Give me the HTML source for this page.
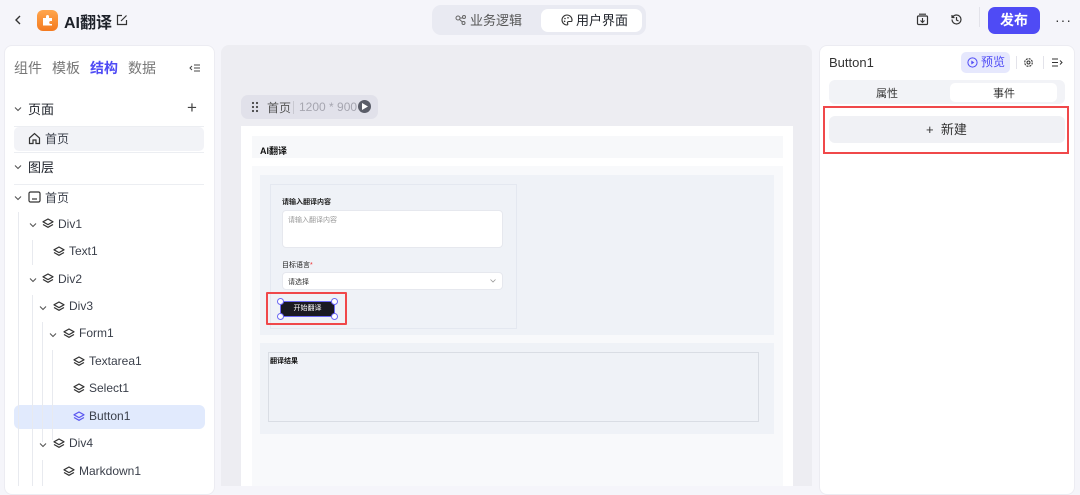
<!DOCTYPE html>
<html><head><meta charset="utf-8"><style>
*{margin:0;padding:0;box-sizing:border-box}
body{width:1080px;height:486px;overflow:hidden;background:#f5f5fa;font-family:"Liberation Sans","Noto Sans CJK SC",sans-serif;position:relative;color:#1d2129}
.a{position:absolute}
.t{position:absolute;white-space:nowrap}
svg{position:absolute}
.row{position:absolute;font-size:12px;color:#3a3f4a;white-space:nowrap}
.vl{position:absolute;width:1px;background:#e8eaef}
</style></head><body>
<svg style="left:13px;top:14px" width="10" height="12" viewBox="0 0 10 12"><path d="M7 2L3 6l4 4" fill="none" stroke="#333" stroke-width="1.4"/></svg>
<div class="a" style="left:37px;top:10px;width:21px;height:21px;border-radius:6px;background:linear-gradient(#ffa64d,#f47a1f)"></div>
<svg style="left:41px;top:14px" width="13" height="13" viewBox="0 0 13 13"><path d="M2 4h3V2.5a1.5 1.5 0 013 0V4h3v3h-1.3a1.5 1.5 0 000 3H11v1.5H2z" fill="#fff"/></svg>
<div class="t" style="left:64px;top:9px;font-size:16px;font-weight:bold;color:#1d2129">AI翻译</div>
<svg style="left:116px;top:14px" width="12" height="12" viewBox="0 0 12 12"><path d="M6 1.5H1.5v9h9V6M5 7l5.5-5.5" fill="none" stroke="#333" stroke-width="1.2"/></svg>
<div class="a" style="left:432px;top:5px;width:214px;height:30px;border-radius:9px;background:#e9eaf2"></div>
<div class="a" style="left:541px;top:9px;width:101px;height:23px;border-radius:7px;background:#fff"></div>
<svg style="left:455px;top:14px" width="12" height="12" viewBox="0 0 12 12"><circle cx="3" cy="4" r="2" fill="none" stroke="#666" stroke-width="1"/><circle cx="9" cy="3" r="1.5" fill="none" stroke="#666" stroke-width="1"/><circle cx="8.5" cy="9" r="1.5" fill="none" stroke="#666" stroke-width="1"/><path d="M5 4h2.5M4.5 5.5l3 2.5" stroke="#666" stroke-width="1"/></svg>
<div class="t" style="left:470px;top:10px;font-size:13px;color:#555">业务逻辑</div>
<svg style="left:561px;top:14px" width="12" height="12" viewBox="0 0 12 12"><path d="M6 1a5 5 0 100 10c1 0 1-1 .5-1.8S7 7.5 8 7.5h2A1 1 0 0011 6.5 5 5 0 006 1z" fill="none" stroke="#333" stroke-width="1.1"/><circle cx="4" cy="4.5" r=".8" fill="#333"/><circle cx="7" cy="3.8" r=".8" fill="#333"/><circle cx="3.6" cy="7.3" r=".8" fill="#333"/></svg>
<div class="t" style="left:576px;top:10px;font-size:13px;color:#1d2129">用户界面</div>
<svg style="left:916px;top:13px" width="13" height="13" viewBox="0 0 13 13"><rect x="1.5" y="3" width="10" height="8.5" rx="1" fill="none" stroke="#333" stroke-width="1.2"/><path d="M3 1.2h7M6.5 5v4.5M4.5 7.5l2 2 2-2" fill="none" stroke="#333" stroke-width="1.1"/></svg>
<svg style="left:950px;top:13px" width="13" height="13" viewBox="0 0 13 13"><path d="M2 6.5a4.5 4.5 0 104.5-4.5A4.5 4.5 0 002.7 4M2 2v2.5h2.5M6.5 4v3l2 1" fill="none" stroke="#333" stroke-width="1.2"/></svg>
<div class="a" style="left:979px;top:7px;width:1px;height:20px;background:#e3e3ea"></div>
<div class="a" style="left:988px;top:7px;width:52px;height:27px;border-radius:7px;background:#4f4bf5;color:#fff;font-size:14px;font-weight:bold;text-align:center;line-height:27px">发布</div>
<div class="t" style="left:1055px;top:12px;font-size:14px;color:#333;letter-spacing:1px">···</div>

<div class="a" style="left:4px;top:45px;width:211px;height:450px;border-radius:8px;background:#fff;border:1px solid #ececf2"></div>
<div class="t" style="left:14px;top:58px;font-size:14px;color:#777">组件</div>
<div class="t" style="left:52px;top:58px;font-size:14px;color:#777">模板</div>
<div class="t" style="left:90px;top:58px;font-size:14px;color:#4f4bf5;font-weight:bold">结构</div>
<div class="t" style="left:128px;top:58px;font-size:14px;color:#777">数据</div>
<svg style="left:189px;top:63px" width="12" height="10" viewBox="0 0 12 10"><path d="M3 3L1 5l2 2M5 2h6M5 5h6M5 8h6" fill="none" stroke="#444" stroke-width="1"/></svg>
<svg style="left:14px;top:106px" width="8" height="6" viewBox="0 0 8 6"><path d="M1 1.5l3 3 3-3" fill="none" stroke="#555" stroke-width="1.1"/></svg>
<div class="t" style="left:28px;top:99px;font-size:13px;color:#1d2129">页面</div>
<div class="t" style="left:187px;top:98px;font-size:17px;color:#444">+</div>
<div class="a" style="left:14px;top:126px;width:190px;height:1px;background:#eceef2"></div>
<div class="a" style="left:14px;top:127px;width:190px;height:24px;border-radius:5px;background:#f2f3f7"></div>
<svg style="left:28px;top:132px" width="13" height="13" viewBox="0 0 13 13"><path d="M1.5 6L6.5 1.5 11.5 6v5.5h-3.5V8H5v3.5H1.5z" fill="none" stroke="#333" stroke-width="1.2"/></svg>
<div class="row" style="left:45px;top:130px">首页</div>
<div class="a" style="left:14px;top:152px;width:190px;height:1px;background:#eceef2"></div>
<svg style="left:14px;top:164px" width="8" height="6" viewBox="0 0 8 6"><path d="M1 1.5l3 3 3-3" fill="none" stroke="#555" stroke-width="1.1"/></svg>
<div class="t" style="left:28px;top:157px;font-size:13px;color:#1d2129">图层</div>
<div class="a" style="left:14px;top:184px;width:190px;height:1px;background:#eceef2"></div>
<div class="a" style="left:14px;top:405px;width:191px;height:24px;border-radius:6px;background:#e1eafd"></div>
<div class="vl" style="left:18px;top:212px;height:274px"></div>
<div class="vl" style="left:32px;top:240px;height:25px"></div>
<div class="vl" style="left:32px;top:295px;height:191px"></div>
<div class="vl" style="left:42px;top:322px;height:120px"></div>
<div class="vl" style="left:52px;top:350px;height:90px"></div>
<div class="vl" style="left:42px;top:460px;height:26px"></div>
<svg style="left:14px;top:195px" width="8" height="6" viewBox="0 0 8 6"><path d="M1 1.5l3 3 3-3" fill="none" stroke="#555" stroke-width="1.1"/></svg>
<svg style="left:28px;top:191px" width="13" height="12" viewBox="0 0 13 12"><rect x="1" y="1" width="11" height="10" rx="1.5" fill="none" stroke="#333" stroke-width="1.2"/><path d="M4 8h5" stroke="#333" stroke-width="1.2"/></svg>
<div class="row" style="left:45px;top:189px">首页</div>

<svg width="0" height="0"><defs><g id="ly"><path d="M6 1L1 3.8 6 6.6 11 3.8z M1 6.5L6 9.3 11 6.5" fill="none" stroke-width="1.2" stroke-linejoin="round"/></g><g id="cv"><path d="M1 1.5l3 3 3-3" fill="none" stroke="#555" stroke-width="1.1"/></g></defs></svg>

<svg style="left:29px;top:222px" width="8" height="6"><use href="#cv"/></svg>
<svg style="left:42px;top:218px" width="12" height="11" stroke="#333"><use href="#ly"/></svg>
<div class="row" style="left:58px;top:217px">Div1</div>
<svg style="left:53px;top:246px" width="12" height="11" stroke="#333"><use href="#ly"/></svg>
<div class="row" style="left:69px;top:244px">Text1</div>
<svg style="left:29px;top:277px" width="8" height="6"><use href="#cv"/></svg>
<svg style="left:42px;top:273px" width="12" height="11" stroke="#333"><use href="#ly"/></svg>
<div class="row" style="left:58px;top:272px">Div2</div>
<svg style="left:39px;top:305px" width="8" height="6"><use href="#cv"/></svg>
<svg style="left:53px;top:301px" width="12" height="11" stroke="#333"><use href="#ly"/></svg>
<div class="row" style="left:69px;top:299px">Div3</div>
<svg style="left:49px;top:332px" width="8" height="6"><use href="#cv"/></svg>
<svg style="left:63px;top:328px" width="12" height="11" stroke="#333"><use href="#ly"/></svg>
<div class="row" style="left:79px;top:326px">Form1</div>
<svg style="left:73px;top:356px" width="12" height="11" stroke="#333"><use href="#ly"/></svg>
<div class="row" style="left:89px;top:354px">Textarea1</div>
<svg style="left:73px;top:383px" width="12" height="11" stroke="#333"><use href="#ly"/></svg>
<div class="row" style="left:89px;top:381px">Select1</div>
<svg style="left:73px;top:411px" width="12" height="11" stroke="#5b57f0"><use href="#ly"/></svg>
<div class="row" style="left:89px;top:409px">Button1</div>
<svg style="left:39px;top:442px" width="8" height="6"><use href="#cv"/></svg>
<svg style="left:53px;top:438px" width="12" height="11" stroke="#333"><use href="#ly"/></svg>
<div class="row" style="left:69px;top:436px">Div4</div>
<svg style="left:63px;top:466px" width="12" height="11" stroke="#333"><use href="#ly"/></svg>
<div class="row" style="left:79px;top:464px">Markdown1</div>

<div class="a" style="left:221px;top:45px;width:591px;height:441px;background:#ededf2;border-radius:8px 8px 0 0"></div>
<div class="a" style="left:241px;top:95px;width:137px;height:24px;border-radius:7px;background:#e1e1ea"></div>
<svg style="left:251px;top:101px" width="8" height="12" viewBox="0 0 8 12"><g fill="#444"><circle cx="2" cy="2" r="1.1"/><circle cx="6" cy="2" r="1.1"/><circle cx="2" cy="6" r="1.1"/><circle cx="6" cy="6" r="1.1"/><circle cx="2" cy="10" r="1.1"/><circle cx="6" cy="10" r="1.1"/></g></svg>
<div class="t" style="left:267px;top:99px;font-size:12px;color:#555">首页</div>
<div class="a" style="left:293px;top:101px;width:1px;height:13px;background:#c8c8d0"></div>
<div class="t" style="left:299px;top:100px;font-size:12px;color:#a6a6b0">1200 * 900</div>
<div class="a" style="left:358px;top:100px;width:13px;height:13px;border-radius:50%;background:#5a5d68"></div>
<svg style="left:362px;top:103px" width="6" height="7"><path d="M0 0L6 3.5 0 7z" fill="#fff"/></svg>

<div class="a" style="left:241px;top:126px;width:552px;height:360px;background:#fff"></div>
<div class="a" style="left:252px;top:136px;width:531px;height:22px;background:#f7f8fa"></div>
<div class="t" style="left:260px;top:144px;font-size:9px;font-weight:bold;color:#111">AI翻译</div>
<div class="a" style="left:252px;top:166px;width:531px;height:320px;background:#f8f9fb"></div>
<div class="a" style="left:260px;top:175px;width:514px;height:160px;background:#eff2f7"></div>
<div class="a" style="left:270px;top:184px;width:247px;height:145px;border:1px solid #e4e8f0"></div>
<div class="t" style="left:282px;top:197px;font-size:7px;color:#222;font-weight:bold">请输入翻译内容</div>
<div class="a" style="left:282px;top:210px;width:221px;height:38px;border-radius:4px;background:#fff;border:1px solid #e6e8ee"></div>
<div class="t" style="left:288px;top:215px;font-size:7px;color:#999">请输入翻译内容</div>
<div class="t" style="left:282px;top:260px;font-size:7px;color:#222">目标语言<span style="color:#e33">*</span></div>
<div class="a" style="left:282px;top:272px;width:221px;height:18px;border-radius:4px;background:#fff;border:1px solid #e6e8ee"></div>
<div class="t" style="left:288px;top:277px;font-size:7px;color:#333">请选择</div>
<svg style="left:490px;top:279px" width="6" height="4"><path d="M.5.5l2.5 2.5L5.5.5" fill="none" stroke="#999" stroke-width=".8"/></svg>
<div class="a" style="left:266px;top:292px;width:81px;height:33px;border:2px solid #f0484a;border-radius:1px"></div>
<div class="a" style="left:280px;top:301px;width:55px;height:16px;background:#1a1a22;border:1px solid #6b68f4;border-radius:2px;color:#fff;font-size:7px;text-align:center;line-height:14px">开始翻译</div>
<div class="a" style="left:277px;top:298px;width:7px;height:7px;border-radius:50%;background:#fff;border:1px solid #6b68f4"></div>
<div class="a" style="left:331px;top:298px;width:7px;height:7px;border-radius:50%;background:#fff;border:1px solid #6b68f4"></div>
<div class="a" style="left:277px;top:313px;width:7px;height:7px;border-radius:50%;background:#fff;border:1px solid #6b68f4"></div>
<div class="a" style="left:331px;top:313px;width:7px;height:7px;border-radius:50%;background:#fff;border:1px solid #6b68f4"></div>

<div class="a" style="left:260px;top:343px;width:514px;height:91px;background:#eff2f7"></div>
<div class="a" style="left:268px;top:352px;width:491px;height:70px;border:1px solid #d9dde4"></div>
<div class="t" style="left:270px;top:356px;font-size:7px;color:#111;font-weight:bold">翻译结果</div>

<div class="a" style="left:819px;top:45px;width:256px;height:450px;border-radius:8px;background:#fff;border:1px solid #ececf2"></div>
<div class="t" style="left:829px;top:55px;font-size:13px;color:#333">Button1</div>
<div class="a" style="left:961px;top:52px;width:49px;height:21px;border-radius:5px;background:#e6e8fd"></div>
<svg style="left:967px;top:57px" width="11" height="11" viewBox="0 0 11 11"><circle cx="5.5" cy="5.5" r="4.6" fill="none" stroke="#4f4bf5" stroke-width="1"/><path d="M4.3 3.5l3 2-3 2z" fill="#4f4bf5"/></svg>
<div class="t" style="left:981px;top:53px;font-size:12px;color:#4f4bf5">预览</div>
<div class="a" style="left:1016px;top:56px;width:1px;height:13px;background:#e3e3ea"></div>
<svg style="left:1023px;top:57px" width="11" height="11" viewBox="0 0 11 11"><circle cx="5.5" cy="5.5" r="3.8" fill="none" stroke="#333" stroke-width="1.1" stroke-dasharray="2 1"/><circle cx="5.5" cy="5.5" r="1.5" fill="none" stroke="#333" stroke-width="1"/></svg>
<div class="a" style="left:1043px;top:56px;width:1px;height:13px;background:#e3e3ea"></div>
<svg style="left:1052px;top:58px" width="11" height="9" viewBox="0 0 11 9"><path d="M0 1h6M0 4.5h6M0 8h6M8 2.5l2 2-2 2" fill="none" stroke="#333" stroke-width="1"/></svg>
<div class="a" style="left:829px;top:80px;width:236px;height:24px;border-radius:6px;background:#f2f3f7"></div>
<div class="a" style="left:950px;top:83px;width:107px;height:19px;border-radius:5px;background:#fff"></div>
<div class="t" style="left:876px;top:85px;font-size:11px;color:#333">属性</div>
<div class="t" style="left:993px;top:85px;font-size:11px;color:#333">事件</div>
<div class="a" style="left:823px;top:106px;width:246px;height:48px;border:2px solid #f0484a"></div>
<div class="a" style="left:829px;top:116px;width:236px;height:27px;border-radius:6px;background:#f0f1f5"></div>
<div class="t" style="left:926px;top:119px;font-size:13px;color:#333">+&nbsp;&nbsp;新建</div>
</body></html>
